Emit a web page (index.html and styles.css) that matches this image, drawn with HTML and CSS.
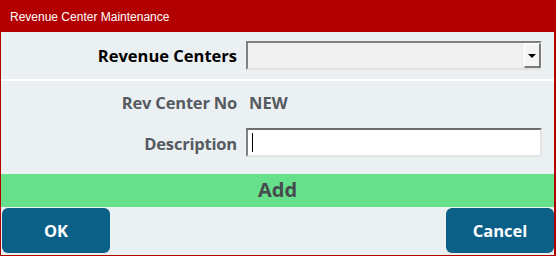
FILE: index.html
```html
<!DOCTYPE html>
<html>
<head>
<meta charset="utf-8">
<link rel="stylesheet" href="styles.css">
</head>
<body>
<div class="window">
  <div class="titlebar">Revenue Center Maintenance</div>
  <div class="content">
    <div class="row row-top">
      <div class="label label-main">Revenue Centers</div>
      <div class="combo">
        <div class="combo-btn"><span class="arrow"></span></div>
      </div>
    </div>
    <div class="sep"></div>
    <div class="row row-no">
      <div class="label">Rev Center No</div>
      <div class="value">NEW</div>
    </div>
    <div class="row row-desc">
      <div class="label">Description</div>
      <div class="input"><span class="caret"></span></div>
    </div>
    <div class="addbar">Add</div>
    <div class="actions">
      <button class="btn">OK</button>
      <button class="btn">Cancel</button>
    </div>
  </div>
</div>
</body>
</html>
```
FILE: styles.css
```css
* { box-sizing: border-box; }
html, body { margin: 0; padding: 0; }
body {
  width: 556px;
  height: 256px;
  overflow: hidden;
  font-family: Tahoma, "DejaVu Sans", "Liberation Sans", sans-serif;
}
.window {
  width: 556px;
  height: 256px;
  display: flex;
  flex-direction: column;
  background: #b20000;
}
.titlebar {
  height: 33px;
  padding: 10px 0 0 10px;
  color: #fff;
  font-family: "Liberation Sans", Arial, sans-serif;
  font-size: 12px;
  line-height: 14px;
}
.content {
  flex: 1;
  margin: 0 2px 1px 1px;
  background: #ebf0f2;
  display: flex;
  flex-direction: column;
}
.row {
  display: grid;
  grid-template-columns: 236px 296px;
  column-gap: 9px;
  align-items: center;
}
.row-top { height: 47px; }
.row-no { height: 42px; }
.row-desc { height: 51px; align-items: start; padding-top: 5px; }
.row-desc .label { line-height: 31px; }
.sep { height: 2px; background: #fff; }
.label {
  text-align: right;
  font-family: "Open Sans", "DejaVu Sans", sans-serif;
  font-weight: 700;
  font-size: 16.5px;
  color: #555a60;
  letter-spacing: -0.2px;
}
.label-main {
  font-size: 16.5px;
  color: #000;
  letter-spacing: 0;
}
.value {
  font-family: "Open Sans", "DejaVu Sans", sans-serif;
  font-weight: 700;
  font-size: 16.5px;
  color: #555a60;
  padding-left: 3px;
}
.combo {
  height: 29px;
  background: #f0f0f0;
  border-top: 2px solid #808080;
  border-left: 2px solid #808080;
  border-right: 2px solid #fafafa;
  border-bottom: 2px solid #e2e2e2;
  display: flex;
  justify-content: flex-end;
}
.combo-btn {
  width: 17px;
  height: 25px;
  margin-right: -1px;
  background: #f4f4f4;
  border-top: 1px solid #fff;
  border-left: 1px solid #fff;
  border-right: 2px solid #7a7a7a;
  border-bottom: 2px solid #7a7a7a;
  display: flex;
  align-items: center;
  justify-content: center;
}
.arrow {
  width: 0;
  height: 0;
  border-left: 4px solid transparent;
  border-right: 4px solid transparent;
  border-top: 4px solid #000;
  margin-top: 2px;
}
.input {
  height: 29px;
  background: #fff;
  border-top: 2px solid #6e6e6e;
  border-left: 2px solid #808080;
  border-right: 2px solid #e4e4e4;
  border-bottom: 2px solid #e4e4e4;
  padding: 3px 0 0 4px;
}
.caret {
  display: block;
  width: 1px;
  height: 19px;
  background: #000;
}
.addbar {
  height: 33px;
  background: #66e08a;
  text-align: center;
  font-family: "Open Sans", "DejaVu Sans", sans-serif;
  font-weight: 700;
  font-size: 20px;
  line-height: 32px;
  color: #474a4e;
}
.actions {
  flex: 1;
  display: flex;
  justify-content: space-between;
  padding: 1px 0 2px 1px;
}
.btn {
  width: 108px;
  height: 45px;
  border: none;
  border-radius: 6px;
  background: #0b6088;
  color: #fff;
  font-family: "Open Sans", "DejaVu Sans", sans-serif;
  font-weight: 700;
  font-size: 16.5px;
  padding: 0;
}
```
